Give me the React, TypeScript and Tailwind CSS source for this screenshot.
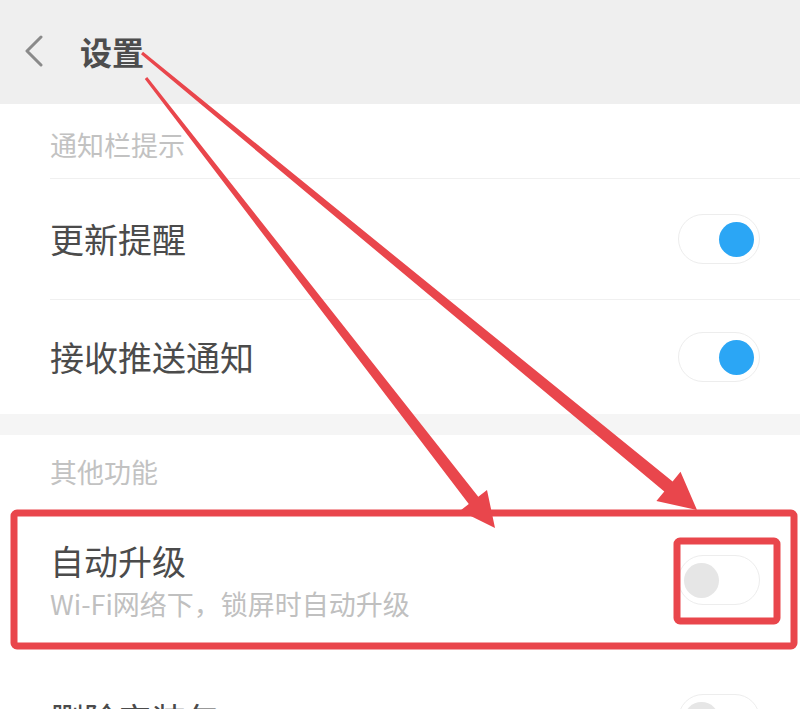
import type { ReactNode } from "react";

const CJK = "font-['Noto_Sans_CJK_SC','Noto_Sans',sans-serif]";

type Pt = [number, number];

function arrowPoints(
	from: Pt,
	tip: Pt,
	startWidth: number,
	shaftWidth: number,
	headLength: number,
	headWidth: number,
) {
	const dx = tip[0] - from[0];
	const dy = tip[1] - from[1];
	const len = Math.hypot(dx, dy);
	const ux = dx / len;
	const uy = dy / len;
	const nx = -uy;
	const ny = ux;
	const bx = tip[0] - ux * headLength;
	const by = tip[1] - uy * headLength;
	const pts: Pt[] = [
		[from[0] + (nx * startWidth) / 2, from[1] + (ny * startWidth) / 2],
		[bx + (nx * shaftWidth) / 2, by + (ny * shaftWidth) / 2],
		[bx + (nx * headWidth) / 2, by + (ny * headWidth) / 2],
		tip,
		[bx - (nx * headWidth) / 2, by - (ny * headWidth) / 2],
		[bx - (nx * shaftWidth) / 2, by - (ny * shaftWidth) / 2],
		[from[0] - (nx * startWidth) / 2, from[1] - (ny * startWidth) / 2],
	];
	return pts.map((p) => `${p[0].toFixed(1)},${p[1].toFixed(1)}`).join(" ");
}

function Toggle({ on }: { on: boolean }) {
	return (
		<div
			className={`flex h-[50px] w-[82px] shrink-0 items-center rounded-full border border-[#ededed] bg-white px-[5px] ${
				on ? "justify-end" : "justify-start"
			}`}
		>
			<div
				className={`size-[35px] rounded-full ${on ? "bg-[#2ba6f5]" : "bg-[#e6e6e6]"}`}
			/>
		</div>
	);
}

function SectionLabel({ children }: { children: ReactNode }) {
	return (
		<p className="pl-[50px] text-[27px] leading-none text-[#c2c2c2]">
			{children}
		</p>
	);
}

function SettingRow({
	title,
	subtitle,
	on,
	className,
}: {
	title: string;
	subtitle?: string;
	on: boolean;
	className: string;
}) {
	return (
		<div
			className={`flex items-center justify-between pl-[50px] pr-[40px] ${className}`}
		>
			<div>
				<p className="text-[34px] leading-none text-[#4b4b4b]">{title}</p>
				{subtitle && (
					<p className="mt-[12px] text-[27px] leading-none text-[#c0c0c0]">
						{subtitle}
					</p>
				)}
			</div>
			<Toggle on={on} />
		</div>
	);
}

export default function App() {
	return (
		<div
			className={`relative h-[709px] w-[800px] overflow-hidden bg-white ${CJK}`}
		>
			<header className="flex h-[104px] items-center bg-[#efefef] pb-[2px]">
				<svg
					width="20"
					height="32"
					viewBox="0 0 20 32"
					className="ml-[24px]"
					fill="none"
				>
					<path
						d="M17 2 L3 16 L17 30"
						stroke="#8a8a8a"
						strokeWidth="3"
						strokeLinecap="round"
						strokeLinejoin="round"
					/>
				</svg>
				<h1 className="ml-[36px] text-[32px] font-bold leading-none text-[#4d4d4d]">
					设置
				</h1>
			</header>

			<div className="flex h-[74px] items-center pt-[6px]">
				<SectionLabel>通知栏提示</SectionLabel>
			</div>
			<div className="ml-[50px] h-px bg-[#f0f0f0]" />
			<SettingRow title="更新提醒" on className="h-[120px]" />
			<div className="ml-[50px] h-px bg-[#f0f0f0]" />
			<SettingRow title="接收推送通知" on className="h-[114px]" />
			<div className="h-[21px] bg-[#f5f5f5]" />
			<div className="flex h-[76px] items-center pb-[4px]">
				<SectionLabel>其他功能</SectionLabel>
			</div>
			<SettingRow
				title="自动升级"
				subtitle="Wi-Fi网络下，锁屏时自动升级"
				on={false}
				className="h-[140px] pb-[2px]"
			/>
			<SettingRow title="删除安装包" on={false} className="h-[120px] pt-[16px]" />

			<svg
				className="pointer-events-none absolute inset-0"
				width="800"
				height="709"
				viewBox="0 0 800 709"
			>
				<g fill="#e9464c">
					<polygon
						points={arrowPoints([142, 53], [697, 510], 3, 13, 37, 38)}
					/>
					<polygon
						points={arrowPoints([146, 78], [495, 528], 3, 12, 35, 34)}
					/>
				</g>
				<g fill="none" stroke="#e9464c" strokeWidth="7">
					<rect x="14" y="513" width="780" height="133" rx="3" />
					<rect x="677" y="541" width="100" height="80" rx="3" />
				</g>
			</svg>
		</div>
	);
}
